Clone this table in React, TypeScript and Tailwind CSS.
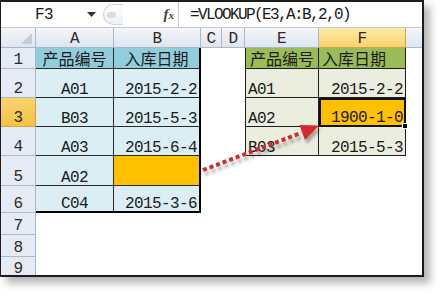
import React from "react";

const CJK = "font-[family-name:'Noto_Sans_CJK_SC',sans-serif] text-[16px] leading-[16px] tracking-normal";

// headers
const CH = "flex items-end justify-center pb-[2px] leading-[12px] border-r border-b border-[#a9b8cb] bg-linear-to-b from-[#f4f6fa] to-[#dfe5ee] text-[#2b2b2b]";
const CH_SEL = "flex items-end justify-center pb-[2px] leading-[12px] border-r border-b border-[#c9a64a] bg-linear-to-b from-[#fdeaa8] to-[#f8d26a] text-[#2b2b2b]";
const RH = "flex items-end justify-center pb-[2px] leading-[12px] border-r border-b border-[#a9b8cb] bg-[#e4ebf5] text-[#2b2b2b]";
const RH_SEL = "flex items-end justify-center pb-[2px] leading-[12px] border-r border-b border-[#c9a64a] bg-linear-to-b from-[#f9d46e] to-[#f5c23f] text-[#2b2b2b]";

// left table
const L_HEAD_A = `flex items-end justify-center pb-[2px] bg-[#92cddc] border-r border-b border-[#2a2a2a] ${CJK}`;
const L_HEAD_B = `flex items-end justify-center pb-[2px] bg-[#92cddc] border-r-2 border-b border-r-black border-b-[#2a2a2a] ${CJK}`;
const L_A = "flex items-end justify-center pb-[1px] leading-[12px] bg-[#daeef3] border-r border-b border-[#2a2a2a]";
const L_A_LAST = "flex items-end justify-center pb-[1px] leading-[12px] bg-[#daeef3] border-r border-b-2 border-r-[#2a2a2a] border-b-black";
const L_B = "flex items-end justify-end pr-[2px] pb-[1px] leading-[12px] bg-[#daeef3] border-r-2 border-b border-r-black border-b-[#2a2a2a]";
const L_B_ORANGE = "flex items-end justify-end pr-[2px] pb-[1px] leading-[12px] bg-[#ffc000] border-r-2 border-b border-r-black border-b-[#2a2a2a]";
const L_B_LAST = "flex items-end justify-end pr-[2px] pb-[1px] leading-[12px] bg-[#daeef3] border-r-2 border-b-2 border-black";

// right table
const R_HEAD_E = `flex items-end justify-center pb-[2px] bg-[#9bbb59] border-l border-r border-b border-[#1e1e1e] ${CJK}`;
const R_HEAD_F = `flex items-end justify-start pl-[3px] pb-[2px] bg-[#9bbb59] border-r border-b border-[#1e1e1e] ${CJK}`;
const R_E = "flex items-end justify-start pl-[2px] pb-[1px] leading-[12px] bg-[#ebeedf] border-l border-r border-b border-[#1e1e1e]";
const R_F = "flex items-end justify-end pr-[2px] pb-[1px] leading-[12px] bg-[#ebeedf] border-r border-b border-[#1e1e1e]";

const W = "bg-white";

function FormulaBar() {
  return (
    <div className="h-[26px] flex items-center border-b border-[#c3c9d1] bg-white shrink-0">
      <div className="w-[99px] h-full flex items-center">
        <span className="ml-[34px] tracking-[-0.6px]">F3</span>
        <svg width="9" height="5" className="ml-auto mr-[4px]">
          <polygon points="0,0 9,0 4.5,5" fill="#333" />
        </svg>
      </div>
      <div className="w-[78px] h-full flex items-center">
        <div className="ml-[3px] w-[20px] h-[21px] rounded-l-full border border-r-0 border-[#cfd4da] bg-linear-to-b from-white to-[#eef0f3] flex items-center pl-[3px]">
          <div className="w-[9px] h-[6px] rounded-full bg-[#d9dde2]" />
        </div>
        <span className="ml-auto mr-[4px] font-[family-name:'Liberation_Serif',serif] italic font-bold text-[15px] text-[#444]">
          f<span className="text-[11px]">x</span>
        </span>
      </div>
      <div className="h-full border-l border-[#c3c9d1]" />
      <div className="pl-[11px] tracking-[-1.6px]">=VLOOKUP(E3,A:B,2,0)</div>
    </div>
  );
}

function Sheet() {
  return (
    <div className="flex-1 grid grid-cols-[35px_78px_87px_21px_23px_74px_87px_1fr] grid-rows-[20px_21px_29px_29px_29px_30px_27px_22px_22px_1fr] tracking-[-0.6px]">
      {/* column header row */}
      <div className="flex items-end justify-end pr-[3px] pb-[3px] border-r border-b border-[#a9b8cb] bg-linear-to-b from-[#f4f6fa] to-[#dfe5ee]">
        <svg width="11" height="11">
          <polygon points="11,0 11,11 0,11" fill="#c3ccd7" />
        </svg>
      </div>
      <div className={CH}>A</div>
      <div className={CH}>B</div>
      <div className={CH}>C</div>
      <div className={CH}>D</div>
      <div className={CH}>E</div>
      <div className={CH_SEL}>F</div>
      <div className="border-b border-[#a9b8cb] bg-linear-to-b from-[#f4f6fa] to-[#dfe5ee]" />

      {/* row 1 */}
      <div className={RH}>1</div>
      <div className={L_HEAD_A}>产品编号</div>
      <div className={L_HEAD_B}>入库日期</div>
      <div className={W} />
      <div className={W} />
      <div className={R_HEAD_E}>产品编号</div>
      <div className={R_HEAD_F}>入库日期</div>
      <div className={W} />

      {/* row 2 */}
      <div className={RH}>2</div>
      <div className={L_A}>A01</div>
      <div className={L_B}>2015-2-2</div>
      <div className={W} />
      <div className={W} />
      <div className={R_E}>A01</div>
      <div className={R_F}>2015-2-2</div>
      <div className={W} />

      {/* row 3 */}
      <div className={RH_SEL}>3</div>
      <div className={L_A}>B03</div>
      <div className={L_B}>2015-5-3</div>
      <div className={W} />
      <div className={W} />
      <div className={R_E}>A02</div>
      <div className="relative flex items-end justify-end pr-[1px] pb-[1px] leading-[12px] bg-[#ffc000] border-2 border-[#111]">
        1900-1-0
        <div className="absolute -right-[4px] -bottom-[4px] w-[6px] h-[6px] bg-black border border-white" />
      </div>
      <div className={W} />

      {/* row 4 */}
      <div className={RH}>4</div>
      <div className={L_A}>A03</div>
      <div className={L_B}>2015-6-4</div>
      <div className={W} />
      <div className={W} />
      <div className={R_E}>B03</div>
      <div className={R_F}>2015-5-3</div>
      <div className={W} />

      {/* row 5 */}
      <div className={RH}>5</div>
      <div className={L_A}>A02</div>
      <div className={L_B_ORANGE}></div>
      <div className={W} />
      <div className={W} />
      <div className={W} />
      <div className={W} />
      <div className={W} />

      {/* row 6 */}
      <div className={RH}>6</div>
      <div className={L_A_LAST}>C04</div>
      <div className={L_B_LAST}>2015-3-6</div>
      <div className={W} />
      <div className={W} />
      <div className={W} />
      <div className={W} />
      <div className={W} />

      {/* rows 7-9 */}
      <div className={RH}>7</div>
      <div className="col-span-7 bg-white" />
      <div className={RH}>8</div>
      <div className="col-span-7 bg-white" />
      <div className="flex items-end justify-center leading-[12px] border-r border-[#a9b8cb] bg-[#e4ebf5] text-[#2b2b2b]">9</div>
      <div className="col-span-7 bg-white" />
    </div>
  );
}

function Arrow() {
  return (
    <svg width="446" height="298" className="absolute left-0 top-0 pointer-events-none">
      <defs>
        <filter id="sh" x="-20%" y="-50%" width="140%" height="200%">
          <feDropShadow dx="2" dy="4" stdDeviation="1.5" floodColor="#000" floodOpacity="0.3" />
        </filter>
      </defs>
      <g filter="url(#sh)">
        <line x1="203" y1="170" x2="301" y2="133" stroke="#d42a2a" strokeWidth="4" strokeDasharray="4 3" />
        <polygon points="319,125.6 299.4,124.9 305,139.9" fill="#d42a2a" />
      </g>
    </svg>
  );
}

export default function App() {
  return (
    <div className="w-[446px] h-[298px] bg-white relative overflow-hidden font-[family-name:'Liberation_Mono',monospace] text-[16px] text-[#1a1a1a]">
      <div className="w-[424px] h-[277px] flex flex-col bg-white border-l border-t-2 border-r-2 border-b-2 border-[#1c1c1c] shadow-[6px_6px_8px_rgba(0,0,0,0.3)]">
        <FormulaBar />
        <Sheet />
      </div>
      <Arrow />
    </div>
  );
}
